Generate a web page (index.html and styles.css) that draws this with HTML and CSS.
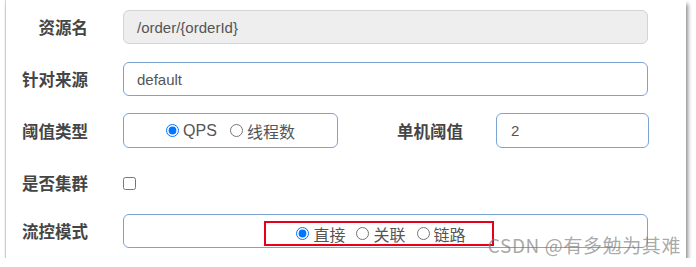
FILE: index.html
```html
<!DOCTYPE html>
<html lang="zh-CN">
<head>
    <meta charset="UTF-8">
    <title>流控规则</title>
    <link rel="stylesheet" href="styles.css">
</head>
<body>
    <div class="card">
        <div class="form">
            <div class="row">
                <label class="label">资源名</label>
                <div class="field disabled">/order/{orderId}</div>
            </div>
            <div class="row">
                <label class="label">针对来源</label>
                <div class="field">default</div>
            </div>
            <div class="row tall">
                <label class="label">阈值类型</label>
                <div class="field radios short">
                    <label class="opt"><input type="radio" name="grade" checked> QPS</label>
                    <label class="opt"><input type="radio" name="grade"> 线程数</label>
                </div>
                <label class="label second">单机阈值</label>
                <div class="field count">2</div>
            </div>
            <div class="row cluster">
                <label class="label">是否集群</label>
                <input type="checkbox" class="check">
            </div>
            <div class="row">
                <label class="label">流控模式</label>
                <div class="field mode">
                    <div class="marked">
                        <label class="opt"><input type="radio" name="strategy" checked> 直接</label>
                        <label class="opt"><input type="radio" name="strategy"> 关联</label>
                        <label class="opt"><input type="radio" name="strategy"> 链路</label>
                    </div>
                </div>
            </div>
        </div>
        <div class="watermark">CSDN @有多勉为其难</div>
    </div>
</body>
</html>
```

FILE: styles.css
```css
body {
    margin: 0;
    background-color: #fff;
    font-family: "Liberation Sans", "Noto Sans CJK SC", sans-serif;
}
.card {
    position: relative;
    width: 680px;
    height: 258px;
    margin-left: 6px;
    background-color: #fff;
    box-shadow: 2px 4px 4px rgba(0, 0, 0, 0.45), -1px 0 1px rgba(0, 0, 0, 0.15);
}
.form {
    padding-top: 10px;
}
.row {
    display: flex;
    align-items: center;
    height: 34px;
    margin-bottom: 18px;
}
.row.tall {
    height: 35px;
    margin-top: -1px;
}
.row.cluster {
    margin-bottom: 14px;
}
.label {
    width: 82px;
    margin-right: 35px;
    text-align: right;
    font-family: "Noto Sans CJK SC", sans-serif;
    font-weight: bold;
    font-size: 16.5px;
    color: #454545;
}
.label.second {
    width: 125px;
    margin-right: 33px;
}
.field {
    box-sizing: border-box;
    width: 525px;
    height: 100%;
    padding-left: 13px;
    display: flex;
    align-items: center;
    border: 1px solid #7ba4d4;
    border-radius: 6px;
    font-size: 15px;
    color: #555;
}
.field.disabled {
    background-color: #eee;
    border-color: #d4d4d4;
}
.field.short {
    width: 215px;
}
.field.count {
    width: 153px;
    padding-left: 14px;
}
.radios {
    justify-content: center;
    padding-left: 0;
    gap: 13px;
}
.opt {
    display: flex;
    align-items: center;
    gap: 4px;
    font-size: 16px;
    color: #555;
    font-family: "Liberation Sans", "Noto Sans CJK SC", sans-serif;
}
.opt input {
    margin: 0;
    width: 13px;
    height: 13px;
    accent-color: #0075ff;
}
.check {
    margin: 1px 0 0 0;
    width: 13px;
    height: 13px;
}
.mode {
    justify-content: center;
    align-items: flex-end;
    padding: 0 13px 1px 0;
}
.marked {
    display: flex;
    align-items: center;
    gap: 11px;
    height: 25px;
    box-sizing: border-box;
    padding: 0 26px 0 30px;
    border: 2px solid #e6001a;
}
.watermark {
    position: absolute;
    right: 5px;
    bottom: 0;
    font-family: "Noto Sans CJK SC", sans-serif;
    font-size: 19px;
    letter-spacing: 0.6px;
    color: rgba(120, 120, 120, 0.65);
}
```
